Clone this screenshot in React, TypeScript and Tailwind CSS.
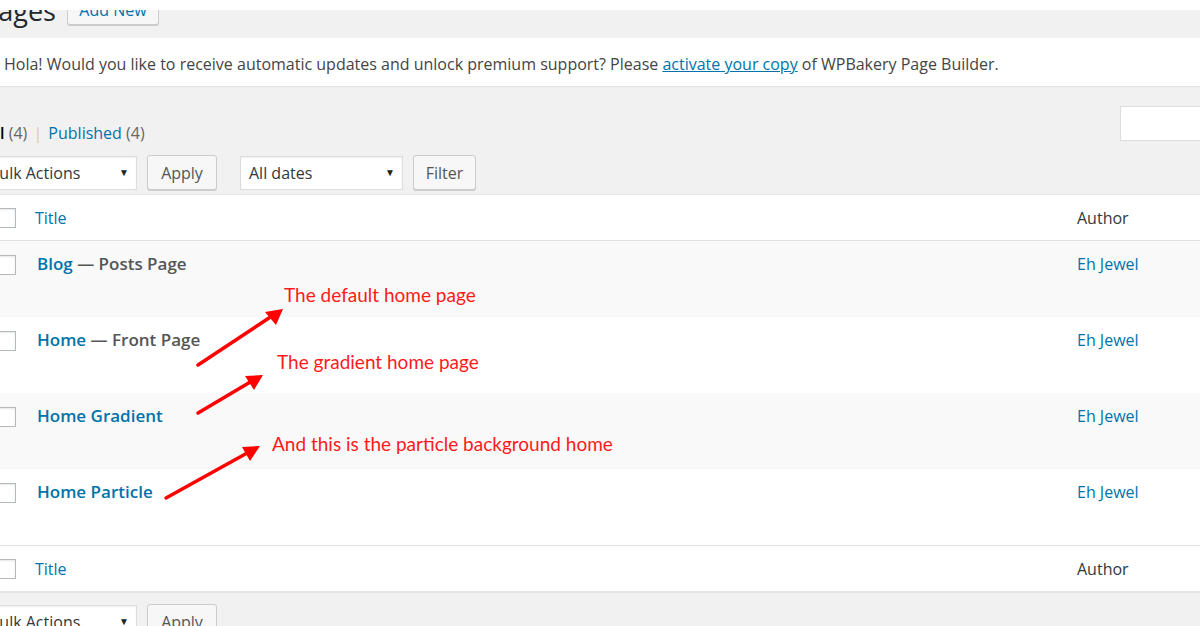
import React from "react";

const font = { fontFamily: '"Open Sans", "Noto Sans", sans-serif' };

function Check() {
  return <span className="block w-[20px] h-[20px] border border-[#b4b9be] bg-white shadow-[inset_0_1px_2px_rgba(0,0,0,0.1)]" />;
}

function Select({ label, w, left = 0 }: { label: string; w: number; left?: number }) {
  return (
    <div
      className="flex items-center justify-between h-[34px] bg-white border border-[#ddd] shadow-[inset_0_1px_2px_rgba(0,0,0,0.07)] pl-[8px] pr-[7px] text-[16px] text-[#32373c]"
      style={{ width: w, marginLeft: left }}
    >
      <span>{label}</span>
      <span className="text-[10px] text-[#222]">▼</span>
    </div>
  );
}

function Button({ label, w }: { label: string; w: number }) {
  return (
    <div
      className="flex items-center justify-center h-[35px] bg-[#f7f7f7] border border-[#ccc] rounded-[3px] shadow-[0_1px_0_#ccc] text-[16px] text-[#555]"
      style={{ width: w }}
    >
      {label}
    </div>
  );
}

const rows = [
  { title: "Blog", state: "Posts Page", stripe: true },
  { title: "Home", state: "Front Page", stripe: false },
  { title: "Home Gradient", state: "", stripe: true },
  { title: "Home Particle", state: "", stripe: false },
];

function HeadRow({ border }: { border: string }) {
  return (
    <div className={`flex items-center h-[46px] bg-white ${border} border-[#e1e1e1]`}>
      <div className="ml-[-4px] w-[39px]"><Check /></div>
      <span className="text-[16px] text-[#0073aa] flex-1">Title</span>
      <span className="w-[123px] text-[16px] text-[#32373c]">Author</span>
    </div>
  );
}

export default function App() {
  return (
    <div className="relative w-[1200px] h-[626px] overflow-hidden bg-[#f1f1f1]" style={font}>
      <div className="relative z-10 h-[10px] bg-white" />

      {/* heading */}
      <div className="flex items-start h-[28px]">
        <h1 className="ml-[-18px] mt-[-17px] text-[27px] leading-[36px] text-[#23282d] font-normal">Pages</h1>
        <div className="ml-[11px] mt-[-15px] flex items-center justify-center w-[92px] h-[30px] bg-[#f7f7f7] border border-[#ccc] rounded-[3px] shadow-[0_1px_0_#ccc] text-[16px] text-[#0073aa]">
          Add New
        </div>
      </div>

      {/* notice */}
      <div className="h-[48px] bg-white shadow-[0_1px_1px_rgba(0,0,0,0.06)] flex items-center pl-[4px] pt-[4px] text-[16px] text-[#444]">
        <span>
          Hola! Would you like to receive automatic updates and unlock premium support? Please{" "}
          <span className="text-[#0073aa] underline">activate your copy</span> of WPBakery Page Builder.
        </span>
      </div>

      {/* status links + search */}
      <div className="mt-[20px] h-[35px] flex justify-between">
        <div className="ml-[-15px] pt-[17px] leading-[20px] text-[16px] text-[#666]">
          <span className="font-semibold text-black">All</span> (4) <span className="mx-[2px] text-[#d8c8b0]">|</span>{" "}
          <span className="text-[#0073aa]">Published</span> (4)
        </div>
        <div className="w-[90px] h-[35px] bg-white border border-[#ddd] mr-[-10px]" />
      </div>

      {/* tablenav */}
      <div className="mt-[14px] flex items-center h-[35px]">
        <Select label="Bulk Actions" w={157} left={-20} />
        <div className="ml-[10px]"><Button label="Apply" w={70} /></div>
        <div className="ml-[23px]"><Select label="All dates" w={163} /></div>
        <div className="ml-[10px]"><Button label="Filter" w={63} /></div>
      </div>

      {/* table */}
      <div className="mt-[4px] border-y border-[#e5e5e5] shadow-[0_1px_1px_rgba(0,0,0,0.04)]">
        <HeadRow border="border-b" />
        {rows.map((r) => (
          <div key={r.title} className={`flex items-start h-[76px] ${r.stripe ? "bg-[#f9f9f9]" : "bg-white"}`}>
            <div className="ml-[-4px] w-[41px] mt-[14px]"><Check /></div>
            <div className="flex-1 mt-[10px] text-[17px] font-semibold">
              <span className="text-[#0073aa]">{r.title}</span>
              {r.state && <span className="text-[#555]"> — {r.state}</span>}
            </div>
            <span className="w-[123px] mt-[11px] text-[16px] text-[#0073aa]">Eh Jewel</span>
          </div>
        ))}
        <HeadRow border="border-t" />
      </div>

      {/* bottom tablenav */}
      <div className="mt-[12px] flex items-center h-[35px]">
        <Select label="Bulk Actions" w={157} left={-20} />
        <div className="ml-[10px]"><Button label="Apply" w={70} /></div>
      </div>

      {/* annotations */}
      <div className="absolute inset-0 pointer-events-none" style={{ fontFamily: "Lato, sans-serif" }}>
        <span className="absolute left-[284px] top-[283px] text-[19px] leading-[24px] text-[#ff1a1a]">The default home page</span>
        <span className="absolute left-[277px] top-[350px] text-[19px] leading-[24px] text-[#ff1a1a]">The gradient home page</span>
        <span className="absolute left-[272px] top-[432px] text-[19px] leading-[24px] text-[#ff1a1a]">And this is the particle background home</span>
        <svg className="absolute inset-0" width="1200" height="626">
          <g stroke="#ff0000" strokeWidth="3.5" strokeLinecap="round" fill="#ff0000">
            <line x1="198" y1="365" x2="272" y2="316" />
            <line x1="198" y1="413" x2="252" y2="381" />
            <line x1="166" y1="498" x2="249" y2="452" />
          </g>
          <g fill="#ff0000">
            <polygon points="283,309 265,312 276,325" />
            <polygon points="263,375 245,376 254,390" />
            <polygon points="260,446 242,447 250,461" />
          </g>
        </svg>
      </div>
    </div>
  );
}
